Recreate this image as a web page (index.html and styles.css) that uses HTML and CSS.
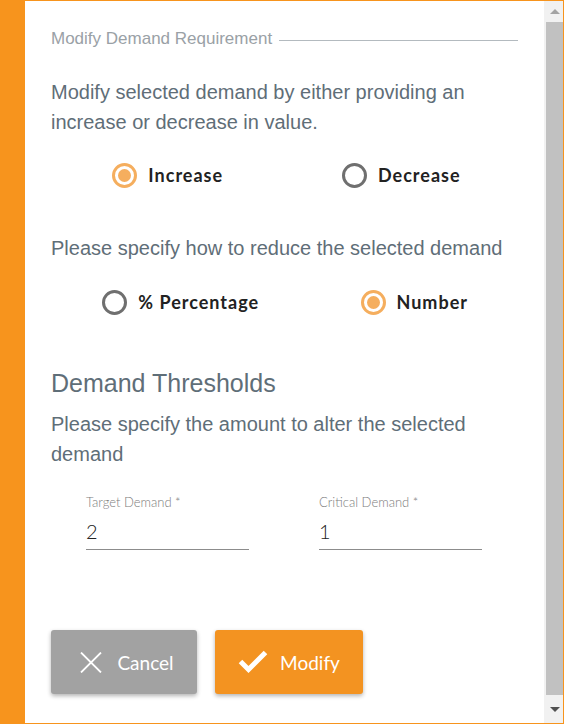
FILE: index.html
```html
<!DOCTYPE html>
<html lang="en">
<head>
<meta charset="utf-8">
<title>Modify Demand Requirement</title>
<link rel="stylesheet" href="styles.css">
</head>
<body>
<div class="frame">
  <div class="side"></div>
  <main class="content">
    <div class="legend">
      <span class="legend-text">Modify Demand Requirement</span>
      <span class="legend-line"></span>
    </div>
    <p class="para first">Modify selected demand by either providing an increase or decrease in value.</p>
    <div class="radios">
      <label class="radio"><span class="dot on"></span><span class="rlabel">Increase</span></label>
      <label class="radio"><span class="dot"></span><span class="rlabel">Decrease</span></label>
    </div>
    <p class="para second">Please specify how to reduce the selected demand</p>
    <div class="radios units">
      <label class="radio"><span class="dot"></span><span class="rlabel">% Percentage</span></label>
      <label class="radio"><span class="dot on"></span><span class="rlabel">Number</span></label>
    </div>
    <h2 class="heading">Demand Thresholds</h2>
    <p class="para third">Please specify the amount to alter the selected demand</p>
    <div class="fields">
      <div class="field">
        <div class="flabel">Target Demand *</div>
        <div class="fvalue">2</div>
      </div>
      <div class="field">
        <div class="flabel">Critical Demand *</div>
        <div class="fvalue">1</div>
      </div>
    </div>
    <div class="actions">
      <button class="btn cancel">
        <svg class="icon-x" width="22" height="21" viewBox="0 0 22 21"><path d="M1 0.5 L21 20.5 M21 0.5 L1 20.5" stroke="#fff" stroke-width="1.8" fill="none"/></svg>
        <span>Cancel</span>
      </button>
      <button class="btn modify">
        <svg class="icon-check" width="30" height="24" viewBox="0 0 30 24"><path d="M2.5 11.5 L10.5 19.5 L27.5 2.5" stroke="#fff" stroke-width="5" fill="none" stroke-linejoin="miter"/></svg>
        <span>Modify</span>
      </button>
    </div>
  </main>
  <div class="scrollbar">
    <div class="arrow up"></div>
    <div class="thumb"></div>
    <div class="arrow down"></div>
  </div>
</div>
</body>
</html>
```
FILE: styles.css
```css
html, body {
  margin: 0;
  padding: 0;
  background: #fff;
}
.frame {
  box-sizing: border-box;
  width: 564px;
  height: 724px;
  display: flex;
  border-top: 1px solid #f7941d;
  border-right: 1px solid #f7941d;
  border-bottom: 1px solid #f7941d;
}
.side {
  width: 25px;
  flex: none;
  background: #f7941d;
}
.content {
  flex: 1;
  padding: 0 26px;
  display: flex;
  flex-direction: column;
  font-family: "Liberation Sans", Arial, sans-serif;
}
.legend {
  margin-top: 28px;
  height: 20px;
  display: flex;
  align-items: center;
  gap: 7px;
}
.legend-text {
  font-size: 17px;
  line-height: 20px;
  color: #9aa1a6;
  white-space: nowrap;
}
.legend-line {
  flex: 1;
  height: 1px;
  background: #b3babf;
  margin-top: 2px;
}
.para {
  margin: 0;
  font-size: 20px;
  line-height: 30px;
  color: #5f6e78;
}
.para.first { margin-top: 28px; }
.para.second { margin-top: 43px; }
.para.third { margin-top: 11px; }
.radios {
  display: grid;
  grid-template-columns: 1fr 1fr;
  justify-items: center;
  height: 30px;
  margin-top: 23px;
}
.radios.units {
  margin-top: 24px;
}
.units .radio {
  margin-left: 26px;
}
.radio {
  display: flex;
  align-items: center;
  gap: 11px;
}
.dot {
  box-sizing: border-box;
  width: 25px;
  height: 25px;
  border-radius: 50%;
  border: 3px solid #6f6f6f;
  position: relative;
}
.dot.on {
  border-color: #f5ae5e;
}
.dot.on::after {
  content: "";
  position: absolute;
  left: 3px;
  top: 3px;
  width: 13px;
  height: 13px;
  border-radius: 50%;
  background: #f5ae5e;
}
.rlabel {
  font-family: Lato, "Open Sans", sans-serif;
  font-weight: 700;
  font-size: 18px;
  letter-spacing: 1px;
  color: #222;
}
.heading {
  margin: 51px 0 0;
  font-weight: normal;
  font-size: 25px;
  line-height: 30px;
  color: #5f6e78;
}
.fields {
  display: flex;
  gap: 70px;
  padding-left: 35px;
  margin-top: 25px;
}
.field {
  width: 163px;
  border-bottom: 1px solid #8c8c8c;
  font-family: Lato, "Open Sans", sans-serif;
}
.flabel {
  font-size: 13px;
  line-height: 16px;
  font-weight: 300;
  color: #7d7d7d;
}
.fvalue {
  margin-top: 9px;
  font-size: 20px;
  line-height: 24px;
  font-weight: 300;
  color: #222;
  padding-bottom: 6px;
}
.actions {
  display: flex;
  gap: 18px;
  margin-top: 80px;
}
.btn {
  height: 64px;
  border: none;
  border-radius: 3px;
  box-shadow: 0 2px 4px rgba(0, 0, 0, 0.3);
  display: flex;
  align-items: center;
  justify-content: center;
  color: #fff;
  font-family: Lato, "Open Sans", sans-serif;
  font-size: 19px;
  padding: 0;
}
.cancel {
  width: 146px;
  background: #a2a2a2;
  gap: 15px;
  padding-left: 6px;
}
.modify {
  width: 148px;
  background: #f39321;
  gap: 12px;
}
.scrollbar {
  width: 19px;
  flex: none;
  background: #f1f1f1;
  display: flex;
  flex-direction: column;
  align-items: flex-end;
}
.thumb {
  width: 17px;
  flex: 1;
  background: #c1c1c1;
}
.arrow {
  height: 21px;
  width: 17px;
  display: flex;
  align-items: center;
  justify-content: center;
}
.arrow::before {
  content: "";
  border-left: 5px solid transparent;
  border-right: 5px solid transparent;
}
.arrow.up::before {
  border-bottom: 5px solid #a3a3a3;
}
.arrow.down {
  height: 28px;
}
.arrow.down::before {
  border-top: 5px solid #505050;
}
```
